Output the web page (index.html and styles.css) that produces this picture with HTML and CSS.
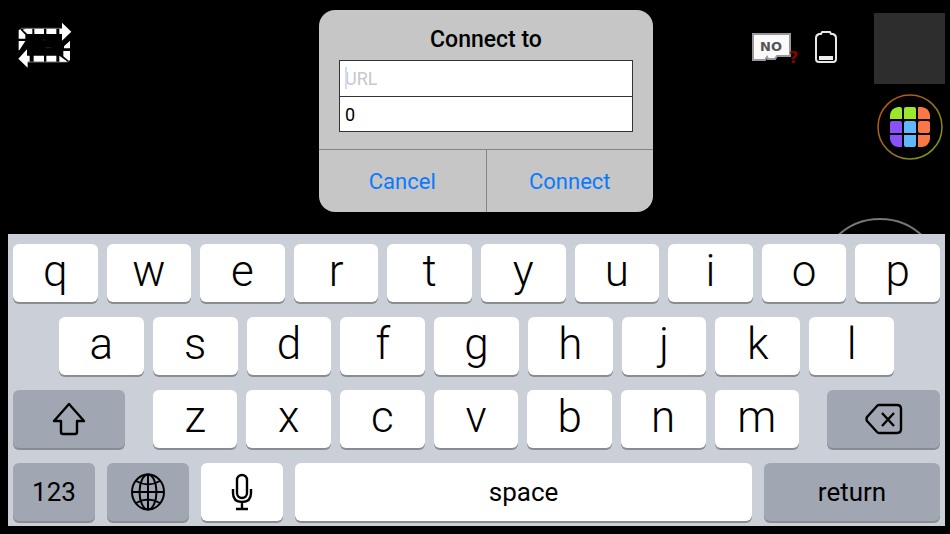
FILE: index.html
```html
<!DOCTYPE html>
<html lang="en">
<head>
    <meta charset="UTF-8">
    <meta name="viewport" content="width=device-width, initial-scale=1.0">
    <title>Connect to</title>
    <link rel="stylesheet" href="styles.css">
</head>
<body>

    <header class="top">
        <button class="icon-button loop" aria-label="Loop">
            <svg width="54" height="46" viewBox="56 66 162 138">
                <path fill="#fff" d="M80 86H99V102H84L70 89ZM105 86H134V102H105ZM141 86H171V102H141ZM180 86H188V68L216 95L188 122V102H180ZM58 91L62 88L78 104V116H58ZM58 123H78L60 151H58ZM103 167H134V185H103ZM141 167H171V185H141ZM180 167L202 183V186H180ZM91 167V185H85V203L57 176L83 148V167ZM212 122V145H194V139ZM192 153H212V180L208 182L192 169Z"/>
                <path fill="none" stroke="#aaa" stroke-width="2" d="M62 90L67 85H188M86 186H205L211 180"/>
                <path fill="none" stroke="#222" stroke-width="3" d="M130 120H139M138 143H156"/>
            </svg>
        </button>

        <form class="dialog">
            <h1>Connect to</h1>
            <div class="fields">
                <input type="text" placeholder="URL" aria-label="URL">
                <input type="text" value="0" aria-label="Port">
                <span class="caret"></span>
            </div>
            <div class="actions">
                <button type="button">Cancel</button>
                <button type="button">Connect</button>
            </div>
        </form>

        <div class="status">
            <svg class="sd-card" width="50" height="36" viewBox="0 0 50 36">
                <path fill="#fafafa" stroke="#999" stroke-width="2" d="M2 3H39V25H26L24 28H17L16 26L14 29H2Z"/>
                <text class="sd-text" x="9" y="20">NO</text>
                <text class="sd-mark" x="38" y="32">?</text>
            </svg>
            <svg class="battery" width="22" height="34" viewBox="0 0 22 34">
                <path fill="none" stroke="#e8e8e8" stroke-width="2" stroke-linejoin="round" d="M7 2H15L16 4H18Q21 5 21 8V29Q21 32 18 32H4Q1 32 1 29V8Q1 5 4 4H6Z"/>
                <path fill="#eee" d="M4 26H18V30H4Z"/>
            </svg>
            <div class="side">
                <div class="preview"></div>
                <button class="icon-button" aria-label="Menu">
                    <svg width="66" height="66" viewBox="0 0 66 66">
                        <defs>
                            <linearGradient id="ring" x1="0" y1="0" x2="1" y2="1">
                                <stop offset="0" stop-color="#c4500f"/>
                                <stop offset="0.5" stop-color="#94701c"/>
                                <stop offset="1" stop-color="#76a51f"/>
                            </linearGradient>
                        </defs>
                        <circle cx="33" cy="33" r="32" fill="none" stroke="url(#ring)" stroke-width="1.5"/>
                        <path fill="#9be72c" d="M13 25V21Q14 14 21 13H23Q25 13 25 15V25ZM27 15Q27 13 29 13H37Q39 13 39 15V25H27Z"/>
                        <path fill="#fb7846" d="M41 13H45Q52 14 53 21V25H41ZM41 29Q41 27 43 27H51Q53 27 53 29V37Q53 39 51 39H43Q41 39 41 37ZM41 41H53V45Q52 52 45 53H41Z"/>
                        <path fill="#8950fc" d="M13 29Q13 27 15 27H23Q25 27 25 29V39H13ZM13 41H25V53H21Q14 52 13 45Z"/>
                        <path fill="#5db8fe" d="M27 29Q27 27 29 27H37Q39 27 39 29V39H27ZM27 41H39V51Q39 53 37 53H29Q27 53 27 51Z"/>
                    </svg>
                </button>
            </div>
        </div>
    </header>

    <button class="shutter" aria-label="Shutter"></button>

    <div class="keyboard">
        <div class="row">
            <button class="key">q</button>
            <button class="key">w</button>
            <button class="key">e</button>
            <button class="key">r</button>
            <button class="key">t</button>
            <button class="key">y</button>
            <button class="key">u</button>
            <button class="key">i</button>
            <button class="key">o</button>
            <button class="key">p</button>
        </div>
        <div class="row row-home">
            <button class="key">a</button>
            <button class="key">s</button>
            <button class="key">d</button>
            <button class="key">f</button>
            <button class="key">g</button>
            <button class="key">h</button>
            <button class="key">j</button>
            <button class="key">k</button>
            <button class="key">l</button>
        </div>
        <div class="row row-shift">
            <button class="key dark" aria-label="Shift">
                <svg width="34" height="34" viewBox="0 0 34 34">
                    <path fill="none" stroke="#000" stroke-width="2.4" stroke-linejoin="round" d="M17 2L32 19H25V30Q25 32 23 32H11Q9 32 9 30V19H2Z"/>
                </svg>
            </button>
            <div class="row">
                <button class="key">z</button>
                <button class="key">x</button>
                <button class="key">c</button>
                <button class="key">v</button>
                <button class="key">b</button>
                <button class="key">n</button>
                <button class="key">m</button>
            </div>
            <button class="key dark" aria-label="Delete">
                <svg width="38" height="32" viewBox="0 0 38 32">
                    <path fill="none" stroke="#000" stroke-width="2.4" stroke-linejoin="round" d="M14 2H32Q36 2 36 6V26Q36 30 32 30H14Q13 30 12 29L2 18Q1 16 2 14L12 3Q13 2 14 2Z"/>
                    <path fill="none" stroke="#000" stroke-width="2.4" d="M17 10L29 23M29 10L17 23"/>
                </svg>
            </button>
        </div>
        <div class="row row-space">
            <button class="key dark label">123</button>
            <button class="key dark" aria-label="Next keyboard">
                <svg width="36" height="38" viewBox="0 0 36 38">
                    <g fill="none" stroke="#000" stroke-width="2">
                        <ellipse cx="18" cy="19" rx="16" ry="17.5"/>
                        <ellipse cx="18" cy="19" rx="8.5" ry="17.5"/>
                        <path d="M18 1V37M2 19H34M6 8Q18 15 30 8M6 30Q18 23 30 30"/>
                    </g>
                </svg>
            </button>
            <button class="key" aria-label="Dictate">
                <svg width="22" height="38" viewBox="0 0 22 38">
                    <g fill="none" stroke="#000" stroke-width="2.4">
                        <rect x="6" y="2" width="10" height="23" rx="5"/>
                        <path d="M2 16V20Q2 29 11 29Q20 29 20 20V16M11 29V36M5 36H17"/>
                    </g>
                </svg>
            </button>
            <button class="key label">space</button>
            <button class="key dark label">return</button>
        </div>
    </div>

</body>
</html>
```
FILE: styles.css
```css
* {
    box-sizing: border-box;
}
body {
    margin: 0;
    position: relative;
    background-color: #000;
    font-family: Roboto, "Liberation Sans", sans-serif;
    overflow: hidden;
}
button {
    padding: 0;
    border: none;
    background: none;
    font-family: inherit;
    color: #000;
    cursor: pointer;
}
svg {
    display: block;
}
.top {
    display: grid;
    grid-template-columns: 319fr 334fr 297fr;
    align-items: start;
    padding: 10px 0 22px;
}
.loop {
    justify-self: start;
    margin: 12px 18px;
}
/* Connection dialog */
.dialog {
    background-color: #c6c6c6;
    border-radius: 16px;
    overflow: hidden;
}
.dialog h1 {
    margin: 0;
    padding-top: 14px;
    font-size: 23px;
    line-height: 32px;
    font-weight: 500;
    text-align: center;
}
.fields {
    position: relative;
    display: flex;
    flex-direction: column;
    margin: 4px 20px 17px;
    border: 1px solid #333;
}
.fields input {
    height: 35px;
    padding: 0 5px;
    border: none;
    border-radius: 0;
    outline: none;
    background-color: #fff;
    color: #000;
    font-family: inherit;
    font-size: 18px;
}
.fields input + input {
    border-top: 1px solid #333;
}
.fields input::placeholder {
    color: #c7c7cd;
}
.caret {
    position: absolute;
    left: 5px;
    top: 6px;
    width: 2px;
    height: 22px;
    background-color: #d5dcfb;
}
.actions {
    display: flex;
    border-top: 1px solid #858585;
}
.actions button {
    flex: 1;
    height: 62px;
    font-size: 22px;
    color: #087aff;
}
.actions button + button {
    border-left: 1px solid #858585;
}
/* Camera status icons */
.status {
    display: flex;
    justify-content: flex-end;
    align-items: flex-start;
    padding: 3px 5px 0 0;
}
.sd-card {
    margin: 18px 14px 0 0;
}
.sd-text {
    font: bold 13px "DejaVu Sans", sans-serif;
    fill: #555;
}
.sd-mark {
    font: bold 16px "DejaVu Sans", sans-serif;
    fill: #8b0000;
}
.battery {
    margin: 17px 37px 0 0;
}
.side {
    display: flex;
    flex-direction: column;
    align-items: center;
    gap: 10px;
}
.preview {
    width: 71px;
    height: 71px;
    background-color: #2d2d2d;
}
.shutter {
    position: absolute;
    top: 218px;
    right: 7px;
    width: 126px;
    height: 126px;
    border: 2px solid #777;
    border-radius: 50%;
}
/* Keyboard */
.keyboard {
    position: relative;
    display: flex;
    flex-direction: column;
    gap: 15px;
    margin: 0 5px 0 8px;
    padding: 10px 5px 5px;
    background-color: #cbcfd7;
}
.row {
    display: flex;
    gap: 9px;
}
.row-home {
    padding: 0 46px;
}
.row-shift {
    display: grid;
    grid-template-columns: 112fr 647fr 113fr;
    gap: 28px;
}
.row-space {
    display: grid;
    grid-template-columns: 82fr 82fr 82fr 457fr 176fr;
    gap: 12px;
}
.key {
    flex: 1;
    display: flex;
    align-items: center;
    justify-content: center;
    min-width: 0;
    height: 58px;
    padding-bottom: 4px;
    border-radius: 6px;
    background-color: #fff;
    box-shadow: 0 2px 0 #898c91;
    font-size: 44px;
    font-weight: 300;
    line-height: 54px;
}
.row-shift > .key,
.row-space .key {
    padding-bottom: 0;
}
.dark {
    background-color: #a0a7b3;
}
.label {
    font-size: 26px;
    font-weight: 400;
}
```
